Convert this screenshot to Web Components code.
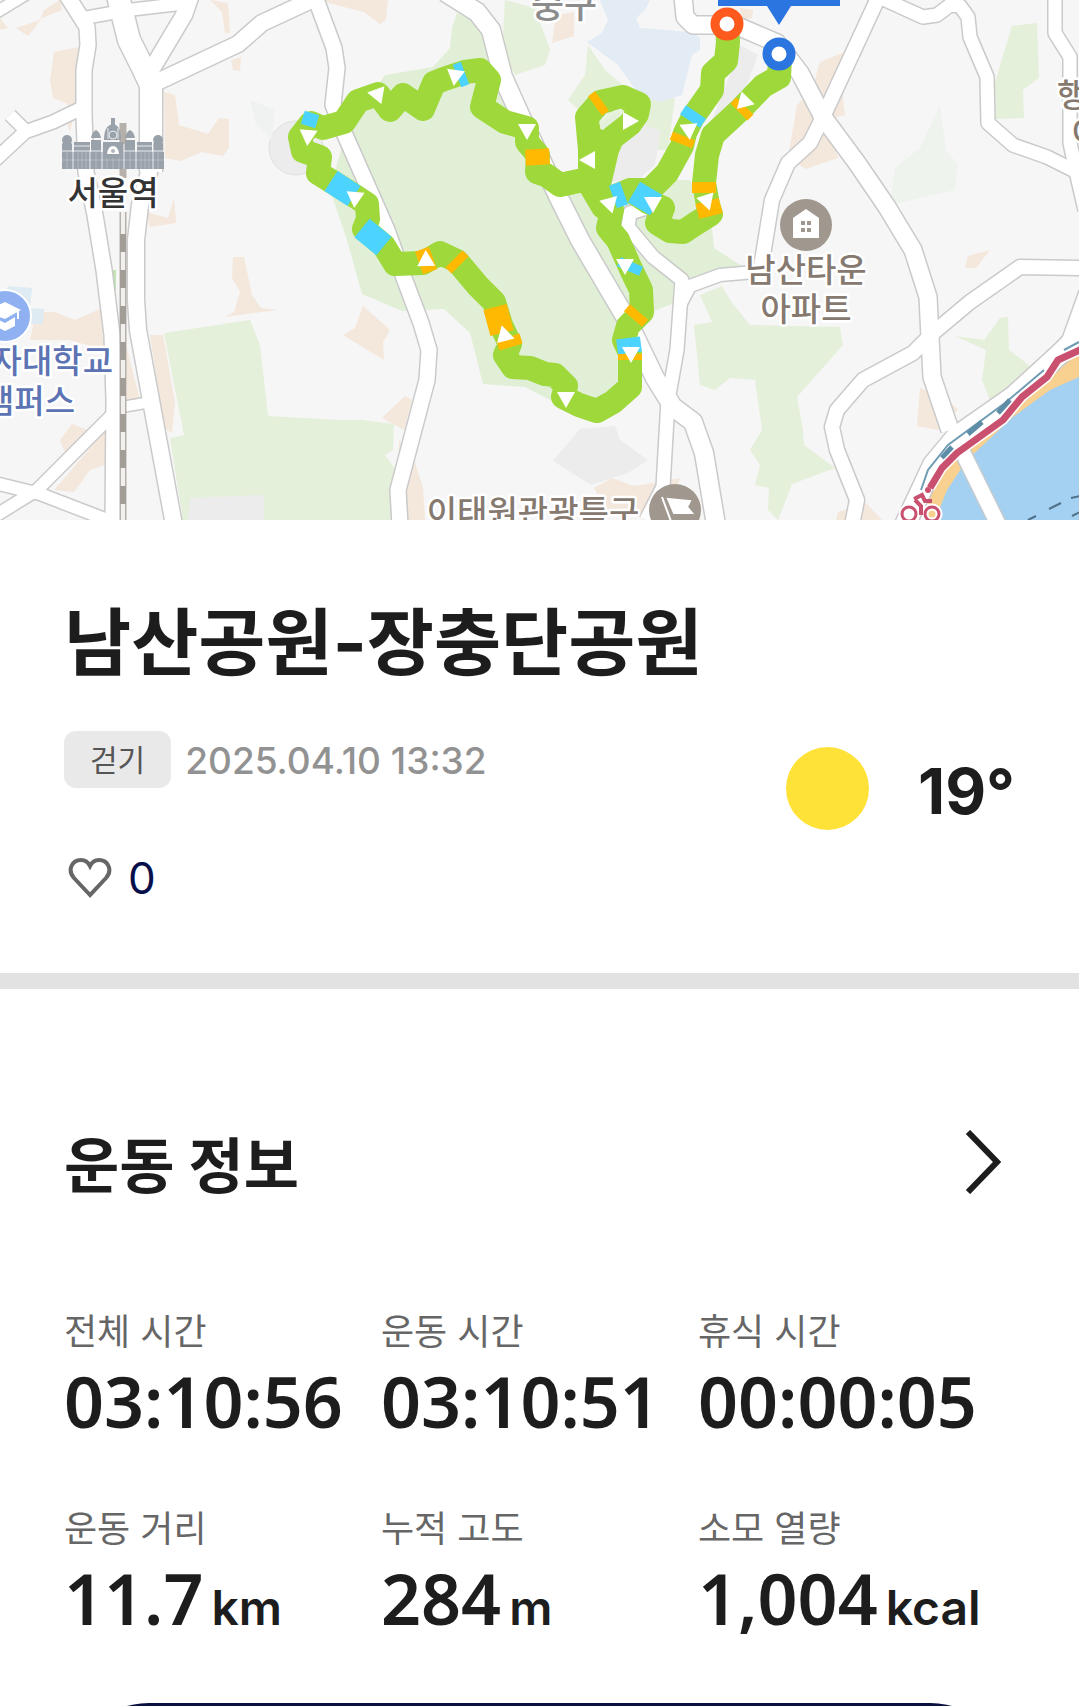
<!DOCTYPE html>
<html lang="ko">
<head>
<meta charset="UTF-8">
<meta name="viewport" content="width=device-width, initial-scale=1">
<title>남산공원-장충단공원</title>
<style>
  body {
    margin: 0;
    height: 100vh;
    overflow: hidden;
    background: #fff;
    color: #1d1d1d;
    font-family: Inter, "Noto Sans CJK KR", sans-serif;
  }
</style>
</head>
<body>
<workout-page>
  <course-map></course-map>
  <workout-header>
    <span slot="title">남산공원-장충단공원</span>
    <span slot="type">걷기</span>
    <time slot="date" datetime="2025-04-10T13:32">2025.04.10 13:32</time>
    <span slot="likes">0</span>
    <span slot="temp">19°</span>
  </workout-header>
  <workout-info>
    <span slot="title">운동 정보</span>
    <stat-item label="전체 시간">03:10:56</stat-item>
    <stat-item label="운동 시간">03:10:51</stat-item>
    <stat-item label="휴식 시간">00:00:05</stat-item>
    <stat-item label="운동 거리" unit="km">11.7</stat-item>
    <stat-item label="누적 고도" unit="m">284</stat-item>
    <stat-item label="소모 열량" unit="kcal">1,004</stat-item>
  </workout-info>
  <action-button></action-button>
</workout-page>

<script>
// [path, width]
const roads = [
  ["M66 -6L87 27L88 45L84 70L84 115L86 172L95 215L104 270L112 335L114 400L113 525", 16],
  ["M118 -4L129 40L143 68L151 85L151 172", 23],
  ["M151 165L140 205L136 240L136 300L138 330L150 395L174 525", 17],
  ["M84 18L128 10L188 3", 13],
  ["M192 -8L184 15L150 72", 17],
  ["M155 83L238 44L262 23L320 -4", 17],
  ["M314 -6L334 48L337 68L333 105L345 135L387 230L404 278L421 323L429 350L427 380L398 490L400 525", 16],
  ["M445 -8L477 12L491 30L503 77L520 115L560 200L580 240L627 320L655 378L673 407L693 422L704 453L716 525", 19],
  ["M650 207L630 213L628 227L653 257L682 280L677 350L668 400L663 487L646 520", 14],
  ["M680 305L690 286L720 275L755 272", 13],
  ["M879 -4L823 117L810 143L788 163L772 200L763 255L760 272", 15],
  ["M683 -4L685 17L693 25L735 25L777 43L800 73L823 117L857 163L887 207L913 250L928 297L930 337L932 377L950 430", 18],
  ["M868 -8L923 17L937 15L950 5L960 6L968 17L970 37L987 77L988 123L1013 145L1047 157L1085 176", 14],
  ["M1055 -4L1055 33L1070 57L1070 143L1078 180L1085 210", 14],
  ["M1085 268L1020 267L970 302L933 333L913 353L863 380L837 410L832 427L837 450L857 500L852 525", 15],
  ["M1088 326L1062 352L1013 397L957 436L933 465L905 525", 21],
  ["M1085 292L1067 342", 12],
  ["M113 414L37 490L-5 516", 13],
  ["M-5 483L40 494L110 521", 13],
  ["M122 407L145 403", 11],
  ["M-5 160L25 132L53 122L80 109", 14],
  ["M27 132L10 115", 13],
  ["M-5 13L28 -7", 12]
];

// fill, polygon points
const areas = [
  ["#f4e7dc", "0,18 8,28 0,30"],
  ["#f4e7dc", "16,28 40,20 44,10 60,0 62,10 42,18 28,36"],
  ["#f4e7dc", "54,52 80,47 76,105 70,132 66,120 68,104 53,98 50,80"],
  ["#f4e7dc", "210,0 228,3 230,33 225,33 222,12"],
  ["#f4e7dc", "231,60 241,57 240,71 233,70"],
  ["#f4e7dc", "164,92 175,95 179,125 208,134 219,118 229,119 229,148 223,156 202,152 180,161 165,158"],
  ["#f4e7dc", "146,212 168,218 174,198 176,223 150,227"],
  ["#f4e7dc", "233,257 244,257 252,295 261,308 278,310 224,317 234,312 240,292 232,278"],
  ["#f4e7dc", "36,312 55,312 75,320 100,309 104,350 70,340 30,340"],
  ["#f4e7dc", "363,306 390,330 383,342 384,360 366,349 343,335 355,328"],
  ["#f4e7dc", "382,418 405,396 412,400 404,430"],
  ["#f4e7dc", "399,440 414,460 423,488 425,520 398,520"],
  ["#f4e7dc", "150,335 163,335 175,402 172,433 164,428"],
  ["#f4e7dc", "126,345 140,400 127,402"],
  ["#f4e7dc", "60,440 72,424 88,430 66,455"],
  ["#f4e7dc", "54,490 106,430 107,464 90,470 74,492"],
  ["#f4e7dc", "320,0 388,0 386,20 380,24 364,12 340,6"],
  ["#f4e7dc", "556,15 574,12 574,36 552,43"],
  ["#f4e7dc", "740,8 753,10 752,18 742,20"],
  ["#f4e7dc", "845,52 820,62 812,90 797,105 788,158 806,169 838,158 826,120 845,115 843,100"],
  ["#f4e7dc", "968,256 990,250 976,268 965,268"],
  ["#f4e7dc", "920,388 948,400 958,410 938,430 917,426"],
  ["#f4e7dc", "838,512 866,503 882,520 836,520"],
  ["#f4e7dc", "594,488 612,478 634,486 660,482 680,478 668,520 606,510"],
  ["#e1efd7", "457,13 490,28 506,85 560,180 590,190 660,180 690,180 712,228 714,248 745,268 690,285 674,303 640,317 632,390 590,422 550,400 525,387 483,384 470,333 444,309 402,311 362,294 347,240 330,190 345,135 385,75 433,67 450,48 452,28"],
  ["#e4f0da", "505,0 535,8 550,50 545,65 530,70 515,75 507,60 503,35"],
  ["#e4f0da", "588,45 605,70 640,100 675,98 668,150 620,150 590,120 568,100 585,75"],
  ["#e4f0da", "164,333 250,320 260,345 268,416 340,420 362,420 394,424 393,450 385,455 396,470 391,520 183,520 170,438 184,435"],
  ["#eef3ee", "940,105 946,150 958,165 955,190 890,205 895,168 920,148"],
  ["#e4f0da", "1012,26 1037,23 1039,78 1023,90 1024,118 996,119 995,82"],
  ["#e4f0da", "955,336 984,340 1000,318 1008,317 1009,350 1030,366 1004,390 990,400 982,380 986,350"],
  ["#e4f0da", "700,295 722,286 730,300 750,325 840,327 843,345 797,397 803,430 804,445 835,468 792,484 778,520 768,510 769,488 755,485 760,465 750,450 762,430 755,380 730,378 715,390 700,385 694,325 712,322"],
  ["#f0f1f1", "250,100 275,110 272,140 256,125"],
  ["#bfe5b4", "111,270 116,270 116,290 112,290"],
  ["#ececec", "190,498 264,495 264,520 188,520"],
  ["#ececec", "625,130 644,125 661,131 655,165 640,178 612,182 604,178"],
  ["#ececec", "580,429 615,426 620,440 648,460 628,473 591,485 553,461"],
  ["#ececec", "740,45 758,55 745,90 708,130 728,80"],
  ["#e3ebf4", "600,0 650,0 645,10 636,18 640,28 690,32 700,38 700,50 692,55 682,95 660,102 640,96 618,65 587,42 602,33 608,20"],
  ["#deebf2", "8,286 32,288 30,308 44,309 43,324 0,324"]
];

const route = [
  "M727 26L728 42L726 61L713 73L712 90L693 117L685 133L682 146L667 173L650 190L630 190L613 197L600 200",
  "M780 58L779 77L763 86L740 110L713 135L707 155L704 183L708 205L711 214L695 224L683 232L670 231L657 223L663 208L648 202L633 192",
  "M603 207L590 185L590 150L587 117L600 102L623 97L639 104L637 114L630 124L612 138L607 150L600 180",
  "M583 180L560 185L546 175L537 172L538 155L527 142L527 128L505 122L482 107L489 80L480 70L465 72L444 79L434 83L423 109L403 95L390 110L378 94L358 101L344 122L323 128L311 123L300 137L303 151L320 157L318 173L347 191L367 204L368 219L364 229L384 246L395 264L423 263L440 253L457 261L478 286L494 302L501 325L510 344L505 355L513 367L530 368L545 374L555 375L566 386L563 397L579 405L597 411L613 402L630 387L630 353L624 340L628 326L642 312L641 290L630 267L618 240L608 228L612 210",
  "M596 140L596 190"
];

// colour, stretch of the route, width where it is narrower
const paces = [
  ["#4cd3ff", "M308 126L312 113", 15],
  ["#4cd3ff", "M331 181L354 196"],
  ["#4cd3ff", "M362 228L384 246"],
  ["#4cd3ff", "M457 76L465 73"],
  ["#4cd3ff", "M696 112L690 121"],
  ["#4cd3ff", "M613 197L624 193"],
  ["#4cd3ff", "M634 192L656 205"],
  ["#4cd3ff", "M632 262L628 271"],
  ["#4cd3ff", "M628 338L630 353"],
  ["#ffb900", "M684 136L681 144"],
  ["#ffb900", "M745 106L739 112"],
  ["#ffb900", "M704 182L704 193"],
  ["#ffb900", "M707 201L711 216"],
  ["#ffb900", "M595 106L602 101"],
  ["#ffb900", "M537 149L538 165"],
  ["#ffb900", "M419 263L433 258"],
  ["#ffb900", "M454 259L460 265"],
  ["#ffb900", "M495 307L502 333"],
  ["#ffb900", "M508 337L511 347"],
  ["#ffb900", "M639 312L633 319"],
  ["#ffb900", "M630 354L630 360"]
];

// x, y, rotation; 0 points down
const arrows = [
  [455, 77, 8], [376, 94, 100], [308, 137, 5], [355, 199, 5], [426, 259, 178],
  [527, 131, 0], [588, 160, 90], [608, 203, 105], [630, 121, -90], [689, 131, -5],
  [746, 102, -75], [707, 202, -18], [653, 204, 0], [625, 266, 0],
  [504, 334, 165], [566, 399, 0], [631, 354, 0]
];

class CourseMap extends HTMLElement {
  constructor() {
    super();
    this.attachShadow({ mode: "open" });
  }

  connectedCallback() {
    this.shadowRoot.innerHTML = `
      <style>
        :host { display: block; overflow: hidden; }
        svg { display: block; width: 100%; height: auto; }
        .road { fill: none; stroke-linejoin: round; }
        .route { fill: none; stroke: #9ed83a; stroke-width: 24; stroke-linejoin: round; stroke-linecap: round; }
        .pace { fill: none; }
        text {
          font: 500 33px "Noto Sans CJK KR", sans-serif;
          fill: #857970;
          stroke: #fff;
          stroke-width: 5px;
          stroke-linejoin: round;
          paint-order: stroke;
        }
      </style>
      <svg viewBox="0 0 1079 520" role="img" aria-label="코스 지도">
        <rect width="1079" height="520" fill="#f6f6f6"/>
        <circle cx="296" cy="148" r="27" fill="#ececec" stroke="#e0e0e0"/>
        ${areas.map(([fill, points]) => `<polygon points="${points}" fill="${fill}"/>`).join("")}
        <path d="M1079 349L1058 360L1047 377L1022 397L1003 420L957 453L942 468L930 490L926 520H1079Z" fill="#f8d08f"/>
        <path d="M1079 377L1050 390L1013 417L967 460L947 490L935 520H1079Z" fill="#a4d1f1"/>
        <path d="M963 453L998 524" stroke="#c4cbd0" stroke-width="18"/>
        <path d="M963 453L998 524" stroke="#fff" stroke-width="15"/>
        ${roads.map(([d, w]) => `<path class="road" d="${d}" stroke="#cacaca" stroke-width="${w + 2}"/>`).join("")}
        ${roads.map(([d, w]) => `<path class="road" d="${d}" stroke="#fff" stroke-width="${w - 1}"/>`).join("")}

        <!-- railway -->
        <path d="M123 212V520M123 123V178" stroke="#b5b0aa" stroke-width="7"/>
        <path d="M123 212V520" stroke="#f1f0ee" stroke-width="4"/>
        <path d="M123 234V520" stroke="#a29d97" stroke-width="6" stroke-dasharray="18 18"/>

        <!-- riverside -->
        <path d="M1079 342L1064 350M1044 370L1005 403L948 445L928 470L921 490" fill="none" stroke="#6f9bb3" stroke-width="2"/>
        <path d="M1010 400L998 413M982 422L968 434M952 447L942 458" stroke="#5e8da8" stroke-width="5"/>
        <path d="M1082 349L1058 360L1047 377L1022 397L1003 420L957 453L942 468L930 488" fill="none" stroke="#fff" stroke-width="10"/>
        <path d="M1082 349L1058 360L1047 377L1022 397L1003 420L957 453L942 468L930 488" fill="none" stroke="#c9516f" stroke-width="7" stroke-linejoin="round"/>
        <path d="M1049 509L1061 503M1071 498L1080 496M1072 516L1080 512M1028 520L1036 516" stroke="#50718a" stroke-width="2"/>
        <g fill="none" stroke="#fff" stroke-width="7"><circle cx="909" cy="514" r="7"/><circle cx="932" cy="514" r="7"/></g>
        <g fill="none" stroke="#c9516f" stroke-width="3"><circle cx="909" cy="514" r="7"/><circle cx="932" cy="514" r="7"/></g>
        <path d="M914 499L922 495L925 501L932 501M915 500L921 506V515" fill="none" stroke="#c9516f" stroke-width="4"/>
        <circle cx="928" cy="490" r="3" fill="#c9516f"/>

        <!-- station building -->
        <g fill="#99a1aa">
          <path d="M62 152H164V169H62ZM62 144L67 137L72 144V152H62ZM153 144L158 137L163 144V152H153Z"/>
          <path d="M74 142H90V152H74ZM137 142H152V152H137ZM91 140H101V152H91ZM125 140H135V152H125ZM103 142H123V154H103Z"/>
          <path d="M91 138Q92 132 96 130Q100 132 101 138ZM125 138Q126 132 130 130Q134 132 135 138ZM104 140Q104 125 113 124Q121 125 121 140ZM111 118H115V126H111Z"/>
          <circle cx="67" cy="140" r="5"/><circle cx="158" cy="140" r="5"/>
        </g>
        <g stroke="#e9ecef" fill="none">
          <path d="M62 151H102M124 151H164M73 140V169M90 150V169M102 144V169M124 144V169M136 150V169M153 140V169M108 128V139M118 128V139M74 146H90M137 146H152"/>
          <path d="M67 152V169M78 152V169M82 152V169M86 152V169M96 152V169M107 158V169M113 158V169M119 158V169M130 152V169M141 152V169M145 152V169M149 152V169M158 152V169M62 160H164" opacity=".3"/>
          <circle cx="113" cy="135" r="4"/>
        </g>
        <path d="M107 154Q108 146 113 146Q118 146 119 154Z" fill="#fff"/>
        <circle cx="113" cy="151" r="2" fill="#aeb5bc"/>

        <text x="113" y="205" text-anchor="middle" style="fill:#333">서울역</text>
        <text x="564" y="18" text-anchor="middle" style="fill:#8c8c8c;font-size:36px">중구</text>
        <text x="806" y="282" text-anchor="middle">남산타운</text>
        <text x="806" y="321" text-anchor="middle">아파트</text>
        <text x="533" y="524" text-anchor="middle">이태원관광특구</text>
        <text x="1057" y="107">행</text>
        <text x="1072" y="145">아</text>
        <text x="113" y="373" text-anchor="end" style="fill:#5c73b4">자대학교</text>
        <text x="75" y="413" text-anchor="end" style="fill:#5c73b4">캠퍼스</text>

        <circle cx="5" cy="316" r="26" fill="#8fb0f1" stroke="#fff" stroke-width="2"/>
        <path d="M-14 311L5 302L21 310L5 319L-6 315ZM-5 318L5 323L15 317V326L5 331L-5 326ZM17 311H19V319H17Z" fill="#fff"/>
        <circle cx="806" cy="225" r="26" fill="#a0988f"/>
        <path d="M793 238V218L806 209L819 218V238Z" fill="#fff"/>
        <path d="M801 221h4v4h-4zM807 221h4v4h-4zM801 228h4v4h-4zM807 228h4v4h-4z" fill="#a0988f"/>
        <circle cx="675" cy="510" r="26" fill="#a0988f"/>
        <path d="M662 497L672 524M668 499L690 501L687 507L692 513L674 513Z" fill="#fff" stroke="#fff" stroke-width="2"/>

        ${route.map(d => `<path class="route" d="${d}"/>`).join("")}
        <path d="M600 124Q608 112 622 110" fill="none" stroke="#e8f3dd" stroke-width="3"/>
        ${paces.map(([stroke, d, w = 24]) => `<path class="pace" d="${d}" stroke="${stroke}" stroke-width="${w}"/>`).join("")}
        ${arrows.map(([x, y, r]) => `<path d="M-9 -7H9L0 9Z" fill="#fff" transform="translate(${x} ${y}) rotate(${r})"/>`).join("")}

        <path d="M718 0H840V6H791L779 25L767 6H718Z" fill="#2a75df"/>
        <circle cx="727" cy="24" r="12" fill="#fff" stroke="#ff5a1e" stroke-width="9"/>
        <circle cx="779" cy="54" r="12" fill="#fff" stroke="#2a75df" stroke-width="9"/>
      </svg>
    `;
  }
}

class WorkoutHeader extends HTMLElement {
  constructor() {
    super();
    this.attachShadow({ mode: "open" });
  }

  connectedCallback() {
    this.shadowRoot.innerHTML = `
      <style>
        :host {
          display: block;
          padding: 79px 64px 73px;
          border-bottom: 16px solid #e2e2e2;
        }
        h1 {
          margin: 0 0 44px;
          font-size: 73px;
          line-height: 88px;
          font-weight: 700;
        }
        .row { display: flex; justify-content: space-between; align-items: flex-start; }
        .meta { display: flex; align-items: flex-start; gap: 14px; margin-bottom: 65px; }
        .type {
          padding: 2px 26px 0;
          border-radius: 12px;
          background: #e9e9e9;
          color: #555;
          font-size: 30px;
          line-height: 55px;
        }
        .date { color: #929292; font-size: 37px; line-height: 60px; font-weight: 500; }
        .likes {
          display: flex;
          align-items: center;
          gap: 16px;
          padding: 0 0 0 4px;
          border: 0;
          background: none;
          color: #07104a;
          font: inherit;
          font-size: 44px;
          line-height: 44px;
        }
        .weather {
          display: flex;
          gap: 49px;
          padding-top: 16px;
          font-size: 63px;
          line-height: 88px;
          font-weight: 700;
        }
        .sun { width: 83px; height: 83px; border-radius: 50%; background: #ffe237; }
      </style>
      <h1><slot name="title"></slot></h1>
      <div class="row">
        <div>
          <div class="meta">
            <span class="type"><slot name="type"></slot></span>
            <span class="date"><slot name="date"></slot></span>
          </div>
          <button class="likes" aria-label="좋아요">
            <svg width="44" height="40" viewBox="0 0 44 40" fill="none" stroke="#666" stroke-width="4">
              <path d="M22 37L6 20C-1 12 4 2 13 2C17 2 20 4 22 8C24 4 27 2 31 2C40 2 45 12 38 20Z"/>
            </svg>
            <slot name="likes"></slot>
          </button>
        </div>
        <div class="weather">
          <span class="sun"></span>
          <slot name="temp"></slot>
        </div>
      </div>
    `;
  }
}

class WorkoutInfo extends HTMLElement {
  constructor() {
    super();
    this.attachShadow({ mode: "open" });
  }

  connectedCallback() {
    this.shadowRoot.innerHTML = `
      <style>
        :host { display: block; padding: 139px 64px 73px; }
        header {
          display: flex;
          justify-content: space-between;
          align-items: flex-start;
          margin-bottom: 106px;
        }
        h2 { margin: 0; font-size: 60px; line-height: 76px; font-weight: 700; }
        button { display: flex; padding: 2px 14px 0; border: 0; background: none; }
        .stats { display: grid; grid-template-columns: repeat(3, 1fr); row-gap: 74px; }
      </style>
      <header>
        <h2><slot name="title"></slot></h2>
        <button aria-label="더 보기">
          <svg width="36" height="64" viewBox="0 0 36 64" fill="none" stroke="#1d1d1d" stroke-width="6">
            <path d="M3 2L32 32L3 62"/>
          </svg>
        </button>
      </header>
      <div class="stats"><slot></slot></div>
    `;
  }
}

class StatItem extends HTMLElement {
  constructor() {
    super();
    this.attachShadow({ mode: "open" });
  }

  connectedCallback() {
    const label = this.getAttribute("label");
    const unit = this.getAttribute("unit");

    this.shadowRoot.innerHTML = `
      <style>
        :host { display: block; white-space: nowrap; }
        .label { margin-bottom: 15px; color: #666; font-size: 36px; line-height: 44px; }
        .value { display: flex; align-items: baseline; gap: 8px; height: 64px; line-height: 64px; }
        .number { font-family: "Noto Sans", sans-serif; font-size: 70px; font-weight: 600; }
        .unit { font-size: 48px; font-weight: 600; }
      </style>
      <div class="label">${label}</div>
      <div class="value">
        <span class="number"><slot></slot></span>
        ${unit ? `<span class="unit">${unit}</span>` : ""}
      </div>
    `;
  }
}

class ActionButton extends HTMLElement {
  constructor() {
    super();
    this.attachShadow({ mode: "open" });
  }

  connectedCallback() {
    this.shadowRoot.innerHTML = `
      <style>
        :host { display: block; padding: 0 64px 64px; }
        button {
          display: block;
          width: 100%;
          height: 170px;
          border: 0;
          border-radius: 85px;
          background: #07103f;
        }
      </style>
      <button aria-label="코스 따라가기"></button>
    `;
  }
}

class WorkoutPage extends HTMLElement {
  constructor() {
    super();
    this.attachShadow({ mode: "open" });
  }

  connectedCallback() {
    this.shadowRoot.innerHTML = `
      <style>
        :host { display: flex; flex-direction: column; }
      </style>
      <slot></slot>
    `;
  }
}

customElements.define("course-map", CourseMap);
customElements.define("workout-header", WorkoutHeader);
customElements.define("stat-item", StatItem);
customElements.define("workout-info", WorkoutInfo);
customElements.define("action-button", ActionButton);
customElements.define("workout-page", WorkoutPage);
</script>
</body>
</html>
